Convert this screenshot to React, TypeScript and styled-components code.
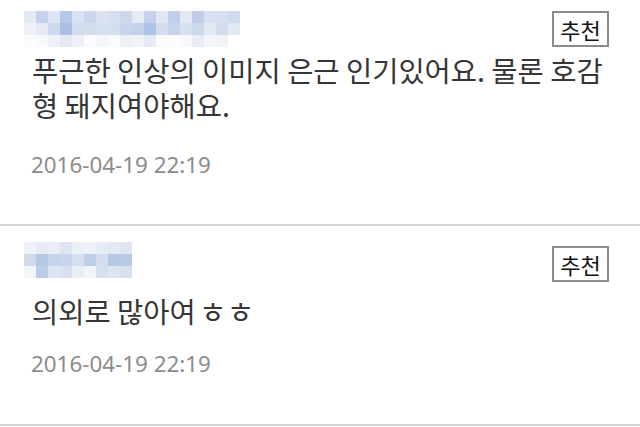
import styled, { createGlobalStyle } from "styled-components";

const GlobalStyle = createGlobalStyle`
  html, body {
    margin: 0;
    padding: 0;
    background: #ffffff;
  }
  body {
    font-family: "Noto Sans CJK KR", "Noto Sans", sans-serif;
    width: 640px;
    height: 427px;
    overflow: hidden;
  }
`;

const List = styled.div`
  display: flex;
  flex-direction: column;
`;

const Item = styled.div<{ $height: number }>`
  height: ${(p) => p.$height}px;
  border-bottom: 2px solid #d2d2d2;
  display: flex;
  flex-direction: column;
  box-sizing: border-box;
`;

const Header = styled.div<{ $top: number }>`
  display: flex;
  justify-content: space-between;
  align-items: flex-start;
  padding: ${(p) => p.$top}px 31px 0 24px;
`;

const Mosaic = styled.div<{ $cols: number }>`
  display: grid;
  grid-template-columns: repeat(${(p) => p.$cols}, 12px);
  grid-auto-rows: 12px;
`;

const Cell = styled.span<{ $c: string }>`
  background: ${(p) => p.$c};
`;

const RecommendButton = styled.button<{ $shift: number }>`
  margin-top: ${(p) => p.$shift}px;
  width: 57px;
  height: 36px;
  box-sizing: border-box;
  border: 2px solid #8b8b8b;
  background: #fff;
  color: #111;
  font-family: "Noto Sans CJK KR", sans-serif;
  font-size: 22px;
  line-height: 30px;
  padding: 0;
`;

const Body = styled.p<{ $gap: number }>`
  margin: ${(p) => p.$gap}px 0 0 32px;
  font-size: 28.5px;
  line-height: 35px;
  color: #363636;
  white-space: nowrap;
`;

const Laugh = styled.span`
  font-size: 30px;
  margin-left: -3px;
`;

const Stamp = styled.div<{ $gap: number }>`
  margin: ${(p) => p.$gap}px 0 0 31px;
  font-family: "Noto Sans", sans-serif;
  font-size: 22.4px;
  line-height: 30px;
  color: #8c8c8c;
`;

const nameA = [
  ["#e4eaf3", "#c3d3ea", "#dde6f2", "#b5c8e6", "#d8e2f0", "#c9d6ec", "#dbe3f0", "#d5dfee", "#cdd8eb", "#e6ebf3", "#c5d3ea", "#e0e7f2", "#bfcfea", "#e3e9f3", "#bfcde6", "#d7e0ef", "#d6e0ef", "#d0dbec"],
  ["#eef2f7", "#e4ebf4", "#cdd9ed", "#a9bfe5", "#d1dcee", "#d3ddee", "#d6dfee", "#d5deed", "#c8d5ea", "#c3d2ec", "#adc3e8", "#d4deee", "#c6d4ec", "#d7e0ef", "#ccd8ec", "#e2e8f2", "#d3ddee", "#e3e9f2"],
  ["#fafbfd", "#f7f9fc", "#eef2f8", "#e2e9f4", "#edf1f7", "#fbfcfd", "#f3f6fa", "#fafbfd", "#eef2f8", "#f0f3f8", "#e5ebf5", "#fafbfd", "#fbfcfd", "#f6f8fb", "#e8edf5", "#f2f5f9", "#f0f3f8", "#ffffff"],
];

const nameB = [
  ["#eef2f8", "#e6ecf5", "#e9eef6", "#dde5f2", "#ebeff6", "#eef2f8", "#e6ecf5", "#e3e9f3", "#dfe6f2"],
  ["#d0dbed", "#b4c8e6", "#c5d3eb", "#c8d5ec", "#d7e0ef", "#bfcfea", "#d3ddee", "#b7c8e5", "#b8c9e5"],
  ["#f3f6fa", "#bccde8", "#dce4f1", "#d8e1f0", "#e9eef6", "#f1f4f9", "#d6dfef", "#dde5f2", "#d7e0ef"],
];

type Comment = {
  name: string[][];
  text: React.ReactNode;
  date: string;
  height: number;
  top: number;
  btnShift: number;
  textGap: number;
  dateGap: number;
};

const comments: Comment[] = [
  {
    name: nameA,
    text: (
      <>
        푸근한 인상의 이미지 은근 인기있어요. 물론 호감
        <br />형 돼지여야해요.
      </>
    ),
    date: "2016-04-19 22:19",
    height: 226,
    top: 11,
    btnShift: 0,
    textGap: 5,
    dateGap: 28,
  },
  {
    name: nameB,
    text: (
      <>
        의외로 많아여 <Laugh>ㅎㅎ</Laugh>
      </>
    ),
    date: "2016-04-19 22:19",
    height: 200,
    top: 16,
    btnShift: 4,
    textGap: 11,
    dateGap: 21,
  },
];

export default function App() {
  return (
    <>
      <GlobalStyle />
      <List>
        {comments.map((c, i) => (
          <Item key={i} $height={c.height}>
            <Header $top={c.top}>
              <Mosaic $cols={c.name[0].length}>
                {c.name.flat().map((col, j) => (
                  <Cell key={j} $c={col} />
                ))}
              </Mosaic>
              <RecommendButton $shift={c.btnShift}>추천</RecommendButton>
            </Header>
            <Body $gap={c.textGap}>{c.text}</Body>
            <Stamp $gap={c.dateGap}>{c.date}</Stamp>
          </Item>
        ))}
      </List>
    </>
  );
}
